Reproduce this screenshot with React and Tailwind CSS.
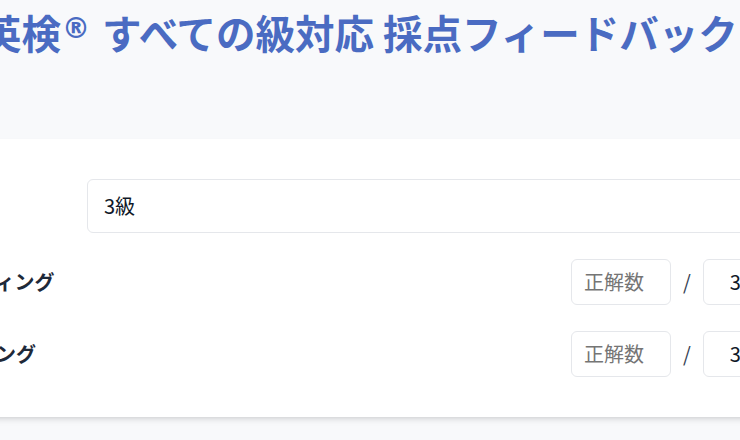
import React from "react";

export default function App() {
  return (
    <div className="w-[740px] h-[440px] overflow-hidden bg-[#f8f9fb] font-['Noto_Sans_CJK_JP',sans-serif]">
      <h1 className="h-[51px] ml-[-18px] pt-[12px] text-[39.5px] leading-[40px] font-bold text-[#4a6bc2] whitespace-nowrap">
        英検<span className="relative top-[-11px] ml-[1px] mr-[3px] font-['DejaVu_Sans',sans-serif] font-bold text-[28px] leading-none">®</span> すべての級対応 採点フィードバック
      </h1>
      <div className="mt-[88px] ml-[-96px] w-[1100px] bg-white shadow-md px-8 py-10 flex flex-col gap-[26px]">
        <div className="flex items-center">
          <div className="w-[151px] shrink-0 text-xl font-bold text-gray-800">受験級</div>
          <div className="flex-1 border border-gray-200 rounded-md px-4 py-3 text-xl leading-7 text-gray-900">
            3級
          </div>
        </div>
        {["リーディング", "リスニング"].map((label) => (
          <div key={label} className="flex items-center">
            <div className="w-[635px] shrink-0 text-xl font-bold text-gray-800">{label}</div>
            <input
              readOnly
              placeholder="正解数"
              className="w-[100px] border border-gray-200 rounded-md px-3 py-2 text-xl leading-7 text-gray-900 placeholder:text-[#757575] outline-none"
            />
            <span className="px-3 text-xl text-gray-700">/</span>
            <input
              readOnly
              value="30"
              className="w-[100px] border border-gray-200 rounded-md pl-[26px] py-2 text-xl leading-7 text-gray-900 outline-none"
            />
          </div>
        ))}
      </div>
    </div>
  );
}
